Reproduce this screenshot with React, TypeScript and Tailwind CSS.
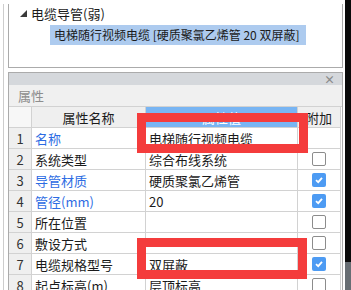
import React from 'react'

const font = { fontFamily: '"Noto Sans CJK SC", "Noto Sans", sans-serif' }

type Row = { no: number; name: string; value: string; blue?: boolean; check?: boolean | null }

const rows: Row[] = [
  { no: 1, name: '名称', value: '电梯随行视频电缆', blue: true, check: null },
  { no: 2, name: '系统类型', value: '综合布线系统', check: false },
  { no: 3, name: '导管材质', value: '硬质聚氯乙烯管', blue: true, check: true },
  { no: 4, name: '管径(mm)', value: '20', blue: true, check: true },
  { no: 5, name: '所在位置', value: '', check: false },
  { no: 6, name: '敷设方式', value: '', check: false },
  { no: 7, name: '电缆规格型号', value: '双屏蔽', check: true },
  { no: 8, name: '起点标高(m)', value: '层顶标高', check: false },
]

function Checkbox({ checked }: { checked: boolean }) {
  if (checked) {
    return (
      <div className="w-[14px] h-[14px] rounded-[2px] bg-[#4d9bf3] flex items-center justify-center">
        <svg width="10" height="10" viewBox="0 0 10 10">
          <path d="M2 5.2 L4.2 7.2 L8 2.8" stroke="#fff" strokeWidth="1.8" fill="none" />
        </svg>
      </div>
    )
  }
  return <div className="w-[14px] h-[14px] rounded-[2px] border border-[#8c8c8c] bg-white" />
}

export default function App() {
  return (
    <div className="relative w-[351px] h-[290px] bg-white flex overflow-hidden text-[12px] text-[#1b1b1b]" style={font}>
      <div className="w-[345px] pl-[3px]">
        <div className="h-full border-l border-[#cdcdcd] pl-[4px]">
          {/* tree panel */}
          <div className="h-[64px] w-[335px] border-l border-r border-b border-[#ababab] bg-white">
            <div className="flex items-center h-[18px] mt-[4px] pl-[11px] gap-[4px]">
              <svg width="7" height="7" viewBox="0 0 7 7">
                <path d="M7 0 L7 7 L0 7 Z" fill="#3a3a3a" />
              </svg>
              <span className="leading-none text-[13px]">电缆导管(弱)</span>
            </div>
            <div className="mt-[3px] ml-[41px] w-[256px] h-[20px] bg-[#adcbef] flex items-center pl-[4px]">
              <span className="leading-none whitespace-nowrap text-[12px]">电梯随行视频电缆 [硬质聚氯乙烯管 20 双屏蔽]</span>
            </div>
          </div>

          {/* property panel */}
          <div className="mt-[4px] w-[335px] border-l border-r border-t border-[#ababab]">
            <div className="h-[12px] bg-[#d5d8dc] flex items-center justify-end pr-[7px]">
              <span className="text-[#8a8a8a] text-[11px] font-bold leading-none">×</span>
            </div>
            <div className="h-[21px] bg-[#f0f0f0] flex items-center pl-[9px] text-[#8d8d8d] text-[13px] leading-none">属性</div>
            <div className="border-t border-[#d2d2d2] grid grid-cols-[23px_114px_152px_43px]">
              <div className="h-[21px] bg-[#f7f7f7] border-r border-b border-[#d2d2d2]" />
              <div className="h-[21px] bg-[#efefef] border-r border-b border-[#d2d2d2] flex items-center justify-center text-[13px] leading-none">属性名称</div>
              <div className="h-[21px] bg-[#79b5f3] border-r border-b border-[#d2d2d2] flex items-center justify-center text-white text-[13px] leading-none">属性值</div>
              <div className="h-[21px] bg-[#efefef] border-r border-b border-[#d2d2d2] flex items-center justify-center text-[13px] leading-none">附加</div>
              {rows.map((r) => (
                <React.Fragment key={r.no}>
                  <div className="h-[21px] bg-[#efefef] border-r border-b border-[#d2d2d2] flex items-center justify-center text-[13px] leading-none text-[#333]">{r.no}</div>
                  <div className={`h-[21px] border-r border-b border-[#d2d2d2] flex items-center pl-[3px] text-[13px] leading-none ${r.blue ? 'text-[#2d6ce3]' : ''}`}>{r.name}</div>
                  <div className="h-[21px] border-r border-b border-[#d2d2d2] flex items-center pl-[3px] text-[13px] leading-none">{r.value}</div>
                  <div className="h-[21px] border-r border-b border-[#d2d2d2] flex items-center justify-center">
                    {r.check !== null && r.check !== undefined ? <Checkbox checked={r.check} /> : null}
                  </div>
                </React.Fragment>
              ))}
            </div>
          </div>
        </div>
      </div>

      {/* right strip */}
      <div className="w-[6px] h-full bg-[#0a0a0a] flex flex-col justify-end">
        <div className="h-[28px] bg-[#676d73]" />
      </div>

      {/* red highlight boxes */}
      <div className="absolute left-[137px] top-[113px] w-[171px] h-[40px] border-[9px] border-[#f43c3c]" />
      <div className="absolute left-[137px] top-[238px] w-[170px] h-[41px] border-[9px] border-[#f43c3c]" />
    </div>
  )
}
